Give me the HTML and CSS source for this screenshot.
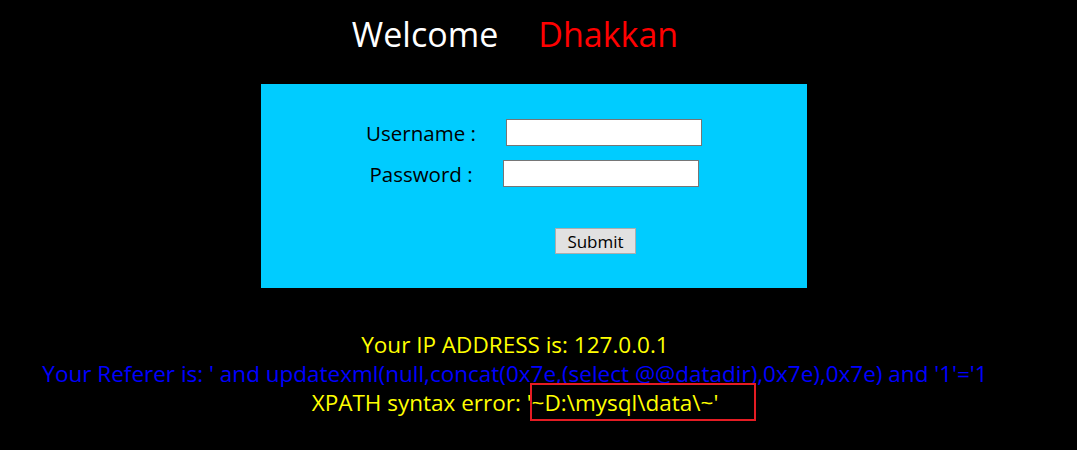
FILE: index.html
```html
<!DOCTYPE html>
<html>
<head>
<meta charset="utf-8">
<link rel="stylesheet" href="styles.css">
</head>
<body>
<div class="page">
  <div class="welcome"><span class="w1">Welcome</span><span class="w2">Dhakkan</span></div>
  <div class="box">
    <form class="login">
      <div class="row"><label class="lbl">Username :</label><input class="field" type="text"></div>
      <div class="row"><label class="lbl">Password :</label><input class="field" type="password"></div>
      <div class="submit-row"><button class="btn" type="button">Submit</button></div>
    </form>
  </div>
  <div class="info">
    <div class="yellow">Your IP ADDRESS is: 127.0.0.1</div>
    <div class="blue">Your Referer is: ' and updatexml(null,concat(0x7e,(select @@datadir),0x7e),0x7e) and '1'='1</div>
    <div class="yellow err">XPATH syntax error: '~D:\mysql\data\~'<span class="mark"></span></div>
  </div>
</div>
</body>
</html>
```
FILE: styles.css
```css
* { box-sizing: border-box; }
body {
  margin: 0;
  background: #000;
  font-family: "Open Sans", "Noto Sans", sans-serif;
}
.page {
  width: 1030px;
  height: 450px;
  position: relative;
}
.welcome {
  text-align: center;
  padding-top: 11px;
  height: 84px;
  font-size: 34px;
  line-height: 46px;
}
.w1 { color: #fff; margin-right: 40px; }
.w2 { color: #f00; }
.box {
  margin-left: 261px;
  width: 546px;
  height: 204px;
  background: #00ccff;
  padding-top: 35px;
}
.login {
  display: flex;
  flex-direction: column;
  gap: 14px;
}
.row {
  display: flex;
  justify-content: center;
  align-items: center;
  gap: 30px;
  height: 27px;
}
.lbl {
  font-size: 20.5px;
  color: #000;
}
.field {
  width: 196px;
  height: 27px;
  border: 1px solid #767676;
  background: #fff;
  margin: 0;
}
.submit-row {
  display: flex;
  margin-top: 27px;
  height: 26px;
  padding-left: 294px;
}
.btn {
  width: 81px;
  height: 26px;
  background: #e1e1e1;
  border: 1px solid #adadad;
  font-family: "Open Sans", "Noto Sans", sans-serif;
  font-size: 17px;
  color: #000;
  padding: 0;
}
.info {
  margin-top: 42px;
  text-align: center;
  font-size: 22.5px;
  line-height: 29px;
}
.yellow { color: #ff0; }
.blue { color: #00f; }
.err { position: relative; }
.mark {
  position: absolute;
  left: 530px;
  top: -5px;
  width: 226px;
  height: 38px;
  border: 2px solid #e51c23;
}
```
